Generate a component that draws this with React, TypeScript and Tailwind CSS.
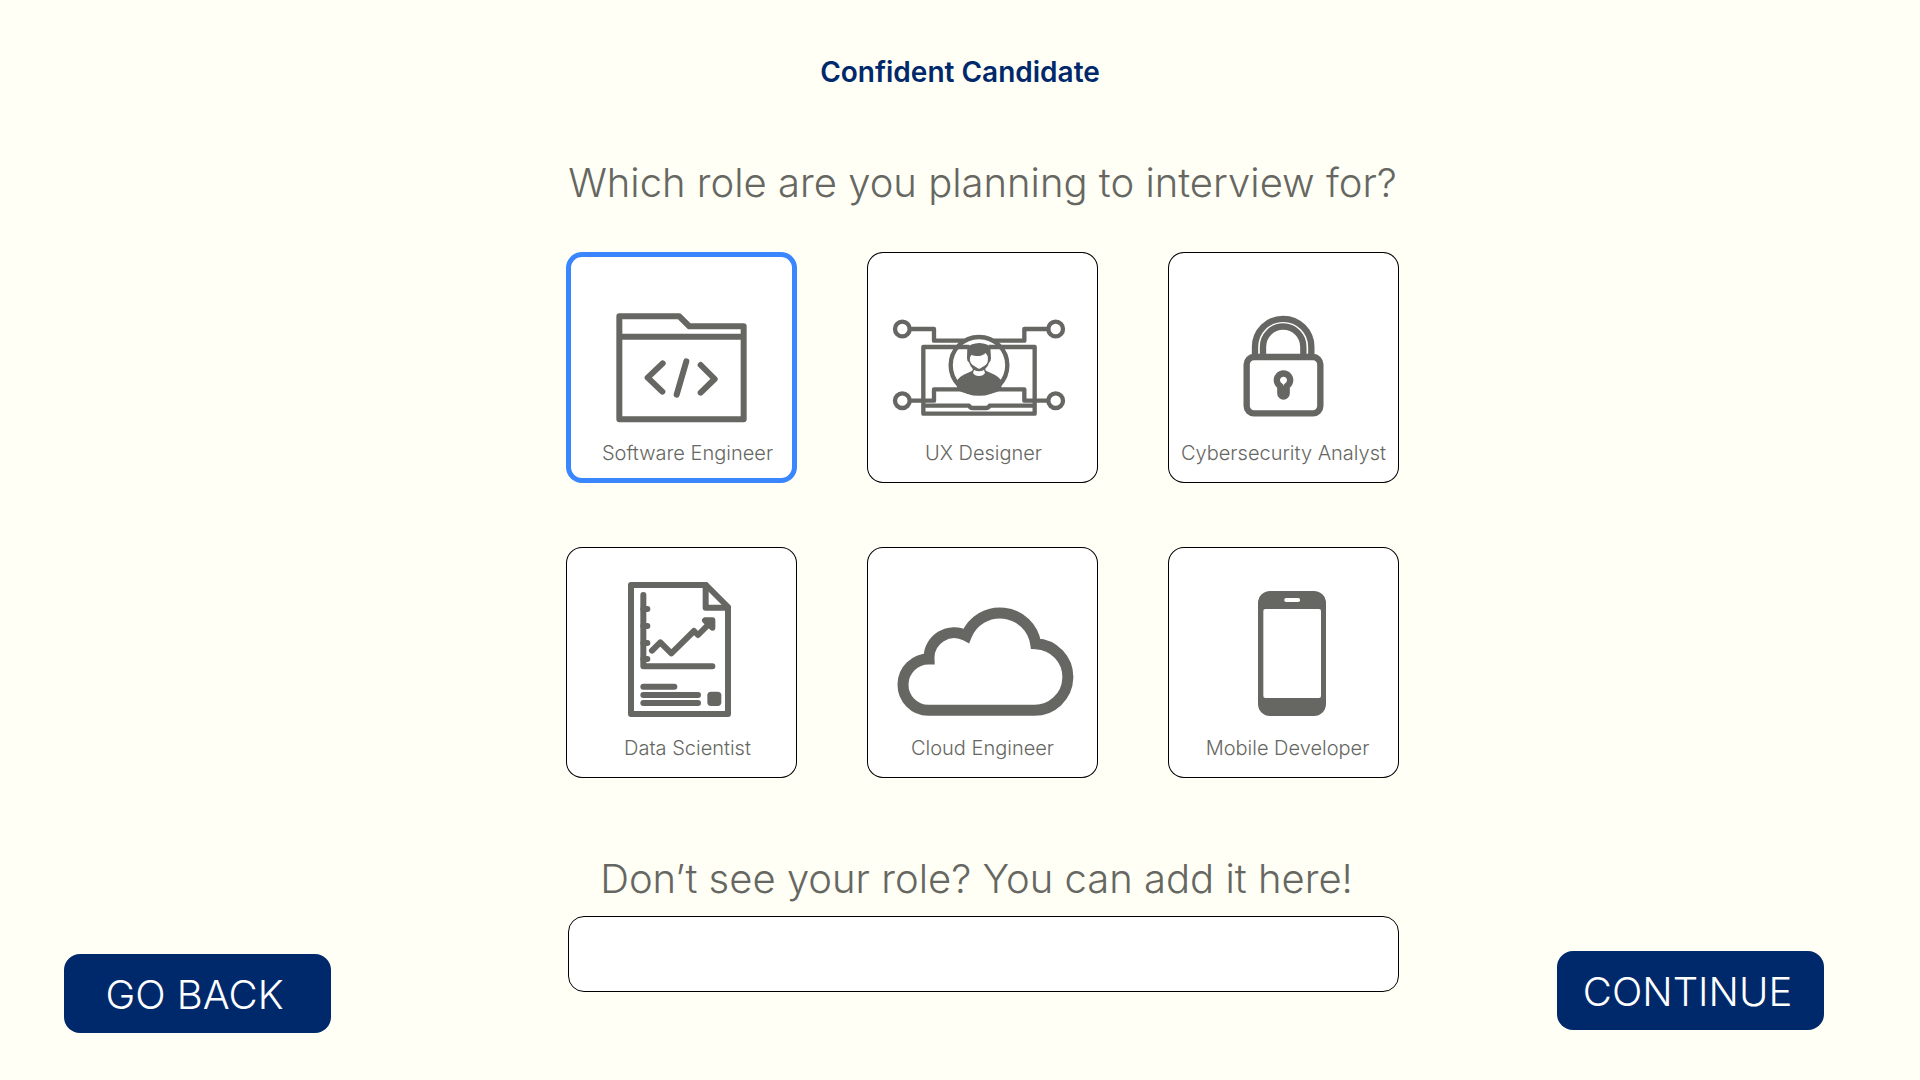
import { useState, type ReactNode } from "react";

type Role = {
  name: string;
  viewBox: string;
  labelClass: string;
  art: ReactNode;
};

const roles: Role[] = [
  {
    name: "Software Engineer",
    viewBox: "18 21 693 567",
    labelClass: "pl-3",
    art: (
      <g fill="none" stroke="currentColor" strokeWidth="18" strokeLinejoin="round" strokeLinecap="round">
        <path d="M178 214H358L388 244H551V523H178Z" />
        <path d="M178 275H551" strokeLinecap="butt" />
        <path d="M308 355L263 398L307 440M379 349L350 449M422 360L464 402L422 443" />
      </g>
    ),
  },
  {
    name: "UX Designer",
    viewBox: "21 21 693 567",
    labelClass: "pl-0.5",
    art: (
      <>
        <g fill="none" stroke="currentColor" strokeWidth="13" strokeLinejoin="round">
          <circle cx="127" cy="252" r="22" />
          <circle cx="587" cy="252" r="22" />
          <circle cx="127" cy="467" r="22" />
          <circle cx="587" cy="467" r="22" />
          <path d="M149 252H222V287H313M565 252H493V287H401" />
          <path d="M149 467H222V433H493V467H565" />
          <path d="M290 306H190V506H524V306H424" />
          <path d="M190 482H327Q330 489 338 489H378Q386 489 389 482H524" />
          <path d="M290 306H328M386 306H424" />
          <circle cx="357" cy="361" r="85" />
        </g>
        <path
          fill="currentColor"
          d="M291 406Q297 396 311 389L334 379Q340 376 338 371Q330 363 327 352Q321 349 321 340L322 307Q333 295 358 294Q383 295 391 307L393 340Q393 349 387 353Q384 365 376 371Q374 376 381 379L404 389Q417 396 424 406V434Q397 450 357 450Q318 450 291 434Z"
        />
        <path
          fill="#fff"
          d="M335 329C350 337 368 333 377 324L383 333Q386 353 377 360L359 371Q356 372 353 370L337 359Q328 352 330 337Z"
        />
        <path fill="#fff" d="M342 375Q357 383 372 375L375 384Q370 393 357 393Q344 393 339 384Z" />
      </>
    ),
  },
  {
    name: "Cybersecurity Analyst",
    viewBox: "24 21 693 567",
    labelClass: "",
    art: (
      <g fill="none" stroke="currentColor" strokeWidth="19">
        <rect x="260" y="336" width="221" height="169" rx="22" />
        <path d="M285 336V306A84.500 84.500 0 0 1 454 306V336" />
        <path d="M309 336V305A60.500 60.500 0 0 1 430 305V336" />
        <path d="M361 423A20 20 0 1 1 380 423V445A9 9 0 0 1 361 445Z" strokeLinejoin="round" />
      </g>
    ),
  },
  {
    name: "Data Scientist",
    viewBox: "18 21 693 567",
    labelClass: "pl-3",
    art: (
      <>
        <g fill="none" stroke="currentColor" strokeWidth="18" strokeLinejoin="round" strokeLinecap="round">
          <path d="M213 135H438L504 201V522H213Z" />
          <path d="M437 135V203H504" />
          <path d="M250 165V379H457" />
          <path d="M250 207H262M250 258H262M250 309H262M250 357H262" />
          <path d="M276 332L301 307L334 340L402 273L414 285L454 245" />
          <path d="M435 241H457V263Z" />
          <path d="M250 440H343M250 465H414M250 489H414" />
        </g>
        <rect x="442" y="455" width="42" height="43" rx="11" fill="currentColor" />
      </>
    ),
  },
  {
    name: "Cloud Engineer",
    viewBox: "21 21 693 567",
    labelClass: "",
    art: (
      <path
        fill="none"
        stroke="currentColor"
        strokeWidth="33"
        d="M205 511A77 77 0 0 1 207 357A76 76 0 0 1 319 287A108.500 108.500 0 0 1 527 311A100 100 0 0 1 520 511Z"
      />
    ),
  },
  {
    name: "Mobile Developer",
    viewBox: "24 21 693 567",
    labelClass: "pl-2",
    art: (
      <>
        <rect x="294" y="153" width="204" height="375" rx="36" fill="currentColor" />
        <rect x="310" y="207" width="173" height="267" rx="6" fill="#fff" />
        <rect x="373" y="174" width="47" height="12" rx="5" fill="#fff" />
      </>
    ),
  },
];

function RoleCard({ role, checked, onSelect }: { role: Role; checked: boolean; onSelect: () => void }) {
  return (
    <label className="flex cursor-pointer flex-col rounded-2xl bg-white pb-[18px] inset-ring inset-ring-black has-checked:inset-ring-5 has-checked:inset-ring-[#3a86ff]">
      <input type="radio" name="role" className="sr-only" checked={checked} onChange={onSelect} />
      <svg viewBox={role.viewBox} className="block w-full" aria-hidden="true">
        {role.art}
      </svg>
      <span className={`text-center text-xl leading-6 font-light whitespace-nowrap ${role.labelClass}`}>
        {role.name}
      </span>
    </label>
  );
}

export default function App() {
  const [selected, setSelected] = useState("Software Engineer");
  const [custom, setCustom] = useState("");

  return (
    <div className="flex min-h-screen flex-col bg-[#fffff5] font-['Inter',sans-serif] text-[#666762]">
      <header className="pt-[54px] text-center text-[28px] leading-9 font-semibold text-[#00296b]">
        Confident Candidate
      </header>
      <main className="grid grid-cols-[1fr_833px_1fr] items-end pt-[69px] pl-[45px]">
        <button
          type="button"
          className="mb-[7px] ml-[19px] h-[79px] w-[267px] rounded-2xl bg-[#00296b] pt-0.5 pr-1.5 text-[40px] font-light text-white"
        >
          GO BACK
        </button>
        <div className="pb-12">
          <fieldset>
            <legend className="w-full text-center text-[40px] leading-12 font-light whitespace-nowrap">
              Which role are you planning to interview for?
            </legend>
            <div className="mt-[45px] grid grid-cols-3 gap-x-[70px] gap-y-16">
              {roles.map((role) => (
                <RoleCard
                  key={role.name}
                  role={role}
                  checked={selected === role.name}
                  onSelect={() => setSelected(role.name)}
                />
              ))}
            </div>
          </fieldset>
          <label
            htmlFor="custom-role"
            className="mt-[77px] block pr-3 text-center text-[40px] leading-12 font-light"
          >
            Don’t see your role? You can add it here!
          </label>
          <input
            id="custom-role"
            type="text"
            value={custom}
            onChange={(e) => setCustom(e.target.value)}
            className="mt-[13px] ml-auto block h-19 w-[831px] rounded-2xl border border-black bg-white px-6 text-3xl font-light"
          />
        </div>
        <button
          type="button"
          className="mr-24 mb-[10px] h-[79px] w-[267px] justify-self-end rounded-2xl bg-[#00296b] pt-0.5 pr-1.5 text-[40px] font-light text-white"
        >
          CONTINUE
        </button>
      </main>
    </div>
  );
}
